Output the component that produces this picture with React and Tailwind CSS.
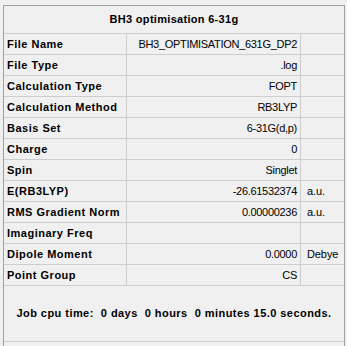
import React from 'react';

const rows = [
  { label: 'File Name', value: 'BH3_OPTIMISATION_631G_DP2', unit: '' },
  { label: 'File Type', value: '.log', unit: '' },
  { label: 'Calculation Type', value: 'FOPT', unit: '' },
  { label: 'Calculation Method', value: 'RB3LYP', unit: '' },
  { label: 'Basis Set', value: '6-31G(d,p)', unit: '' },
  { label: 'Charge', value: '0', unit: '' },
  { label: 'Spin', value: 'Singlet', unit: '' },
  { label: 'E(RB3LYP)', value: '-26.61532374', unit: 'a.u.' },
  { label: 'RMS Gradient Norm', value: '0.00000236', unit: 'a.u.' },
  { label: 'Imaginary Freq', value: '', unit: '' },
  { label: 'Dipole Moment', value: '0.0000', unit: 'Debye' },
  { label: 'Point Group', value: 'CS', unit: '' },
];

function SummaryRow({ label, value, unit }) {
  return (
    <div className="flex h-[21px] border-b border-[#cdcdcd]">
      <div className="w-[123px] shrink-0 border-r border-[#cdcdcd] pl-[3px] flex items-center font-bold text-[11px] tracking-[0.5px]">
        {label}
      </div>
      <div className="w-[174px] shrink-0 border-r border-[#cdcdcd] pr-[3px] flex items-center justify-end text-[11px] tracking-[-0.3px]">
        {value}
      </div>
      <div className="flex-1 pl-[6px] flex items-center text-[11px] tracking-[-0.1px]">
        {unit}
      </div>
    </div>
  );
}

export default function App() {
  return (
    <div className="h-[346px] w-[347px] overflow-hidden bg-[#f0f0f0] pt-[5px] pl-[3px] text-black" style={{ fontFamily: '"Liberation Sans", Arial, sans-serif' }}>
      <div className="w-[342px] h-[360px] border-l border-t border-r border-[#a0a0a0]">
        {/* title */}
        <div className="h-[28px] border-b border-[#cdcdcd] flex items-center justify-center font-bold text-[11px] tracking-[0.3px]">
          BH3 optimisation 6-31g
        </div>

        {rows.map((r) => (
          <SummaryRow key={r.label} {...r} />
        ))}

        {/* cpu time footer */}
        <div className="h-[56px] border-b border-[#cdcdcd] flex items-center justify-center font-bold text-[11px] tracking-[0.45px] whitespace-pre">
          {'Job cpu time:  0 days  0 hours  0 minutes 15.0 seconds.'}
        </div>
      </div>
    </div>
  );
}
